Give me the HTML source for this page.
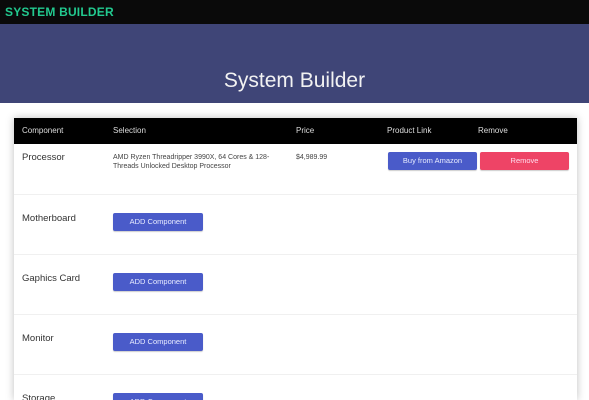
<!DOCTYPE html>
<html><head><style>
*{margin:0;padding:0;box-sizing:border-box}
html,body{width:589px;height:400px;overflow:hidden}
body{background:#fff;font-family:"Liberation Sans",sans-serif;position:relative}
.top{position:absolute;left:0;top:0;width:589px;height:24px;background:#0a0a0a}
.logo{position:absolute;left:5px;top:5px;color:#22c98f;font-size:12px;font-weight:bold;letter-spacing:0.2px}
.banner{position:absolute;left:0;top:24px;width:589px;height:79px;background:#3f4577}
.banner h1{position:absolute;left:0;right:0;top:45px;text-align:center;color:#f2f2f2;font-weight:normal;font-size:21px}
.card{position:absolute;left:14px;top:118px;width:563px;height:282px;background:#fff;box-shadow:0 0 8px rgba(0,0,0,0.25);overflow:hidden}
.head{position:absolute;left:0;top:0;width:563px;height:26px;background:#000;color:#ddd;font-size:8px}
.head span,.row span{position:absolute}
.row{position:absolute;left:0;width:563px;height:60px;border-top:1px solid #f0f0f0}
.name{left:8px;top:18px;font-size:9.5px;color:#333}
.sel{left:99px;top:9px;font-size:7px;color:#444;width:180px;line-height:9px}
.btn{position:absolute;background:#4a5bc9;color:#e8ecff;font-size:7.5px;text-align:center;border-radius:2px;box-shadow:0 1px 1px rgba(0,0,0,.2)}
.add{left:99px;width:90px;height:18px;line-height:18px;top:18px}
</style></head><body>
<div class="top"><div class="logo">SYSTEM BUILDER</div></div>
<div class="banner"><h1>System Builder</h1></div>
<div class="card">
<div class="head"><span style="left:8px;top:8px">Component</span><span style="left:99px;top:8px">Selection</span><span style="left:282px;top:8px">Price</span><span style="left:373px;top:8px">Product Link</span><span style="left:464px;top:8px">Remove</span></div>
<div class="row" style="top:26px;height:50px;border-top:none">
<span class="name" style="top:8px">Processor</span>
<span class="sel">AMD Ryzen Threadripper 3990X, 64 Cores &amp; 128-Threads Unlocked Desktop Processor</span>
<span style="left:282px;top:10px;font-size:7px;color:#444">$4,989.99</span>
<div class="btn" style="left:374px;top:8px;width:89px;height:18px;line-height:18px">Buy from Amazon</div>
<div class="btn" style="left:466px;top:8px;width:89px;height:18px;line-height:18px;background:#ee4466;color:#fde">Remove</div>
</div>
<div class="row" style="top:76px"><span class="name">Motherboard</span><div class="btn add">ADD Component</div></div>
<div class="row" style="top:136px"><span class="name">Gaphics Card</span><div class="btn add">ADD Component</div></div>
<div class="row" style="top:196px"><span class="name">Monitor</span><div class="btn add">ADD Component</div></div>
<div class="row" style="top:256px;height:26px"><span class="name">Storage</span><div class="btn add">ADD Component</div></div>
</div>
</body></html>
